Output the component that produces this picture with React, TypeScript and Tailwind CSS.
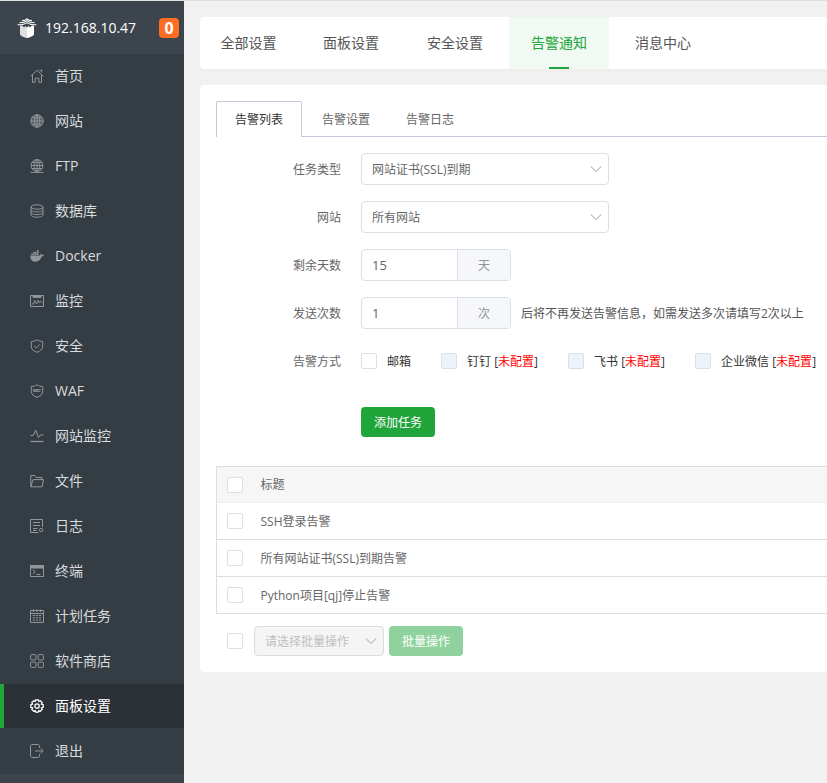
import React, { useState } from "react";

const icons: Record<string, React.ReactNode> = {
  home: (
    <>
      <path d="M.8 7.2 7 1.2l6.2 6" />
      <path d="M2.5 6v7.3h2.7V9.2h3.6v4.1h2.7V6" />
      <path d="M9.6 1.2h2v2.3" />
    </>
  ),
  globe: (
    <>
      <circle cx="7" cy="7" r="6.2" fill="currentColor" fillOpacity=".3" />
      <ellipse cx="7" cy="7" rx="2.8" ry="6.2" />
      <path d="M7 .8v12.4M.8 7h12.4M1.8 3.8h10.4M1.8 10.2h10.4" />
    </>
  ),
  ftp: (
    <>
      <circle cx="7" cy="6.5" r="5.9" />
      <ellipse cx="7" cy="6.5" rx="2.8" ry="5.9" />
      <path d="M7 .6v12.4M1.1 6.5h11.8M1.9 3.6h10.2M1.9 9.5h10.2M.5 13.4h13" />
    </>
  ),
  database: (
    <>
      <ellipse cx="7" cy="3" rx="6" ry="2.2" />
      <path d="M1 3v8c0 1.2 2.7 2.2 6 2.2s6-1 6-2.2V3" />
      <path d="M1 5.7c0 1.2 2.7 2.2 6 2.2s6-1 6-2.2M1 8.4c0 1.2 2.7 2.2 6 2.2s6-1 6-2.2" />
    </>
  ),
  docker: (
    <g fill="currentColor" stroke="none">
      <path d="M.3 6.400h9.500c.8 0 1-.9.5-2 .9.2 1.500.9 1.600 1.500.7-.2 1.500-.1 2 .3-.4 1-1.300 1.300-2.300 1.300C10.700 10.700 8.600 12.700 5.300 12.700 2 12.700.2 10.400.3 6.400z" />
      <path d="M1.300 4.500h1.600v1.500H1.300zM3.200 4.500h1.600v1.500H3.200zM5.100 4.500h1.600v1.500H5.100zM7 4.500h1.600v1.500H7zM3.200 2.700h1.600v1.500H3.200zM5.100 2.700h1.600v1.500H5.100zM7 2.700h1.600v1.500H7zM7 .9h1.600v1.500H7z" />
    </g>
  ),
  monitor: (
    <>
      <path d="M.5 1.500h13v11H.5z" />
      <path d="M3 2h8v1.400H3z" fill="currentColor" />
      <path d="M1.500 10h2l1.200-3.500L6.600 10l1.600-3.600 1.400 2.400 1-1.600 1.900 1.800" />
    </>
  ),
  shield: (
    <>
      <path d="M7 .7c1.700 1.200 3.500 1.700 5.700 1.800v4.700c0 3-2.200 4.900-5.700 6.100C3.500 12.100 1.300 10.200 1.300 7.200V2.500C3.500 2.400 5.300 1.900 7 .7z" />
      <path d="m4.200 7 2.100 2.100 3.600-3.700" />
    </>
  ),
  waf: (
    <>
      <path d="M7 .7c1.700 1.200 3.500 1.700 5.700 1.800v4.700c0 3-2.200 4.900-5.700 6.100C3.500 12.100 1.300 10.200 1.300 7.200V2.500C3.500 2.400 5.300 1.900 7 .7z" />
      <path d="M3 5.500h8M3.500 7.500h7" strokeOpacity=".7" />
      <path d="m3 5.300 1 2.400 1.100-2 1 2 1.100-2.400 1 2.400 1.200-2.200" strokeOpacity=".7" />
    </>
  ),
  pulse: (
    <>
      <path d="M.5 6.500h2.600l2.700-5.300 2.700 7.300 2-2.500h3" />
      <path d="M.5 12.500h13" strokeWidth="1.300" />
    </>
  ),
  folder: (
    <>
      <path d="M.8 12.800V1.500h4l1.500 2h5.500v2" />
      <path d="M.8 12.800 3 5.600h10.400l-1.200 7.200z" />
    </>
  ),
  log: (
    <>
      <path d="M12.500 8V.5h-12v13h8" />
      <path d="M3 3.500h7M3 6.500h7M3 9.500h4.500M3 11.500h3.500" />
      <circle cx="11.200" cy="11" r="1.700" />
    </>
  ),
  terminal: (
    <>
      <path d="M.5 1.500h13v11H.5z" />
      <path d="M.5 1.500h13v2.500H.5z" fill="currentColor" />
      <path d="m3 5.800 2.200 2L3 9.900M6.400 10.500h4" />
    </>
  ),
  calendar: (
    <>
      <path d="M.5 1.500h13v12H.5zM.5 4.500h13M3.500.3v2.700M7 .3v2.700M10.500.3v2.700" />
      <path d="M2.800 6.500h2.300M5.900 6.500h2.300M9 6.500h2.300M2.800 8.800h2.300M5.900 8.800h2.300M9 8.800h2.300M2.800 11.200h2.300M5.900 11.200h2.300M9 11.200h2.300" />
    </>
  ),
  apps: (
    <>
      <rect x=".6" y=".6" width="5.300" height="5.300" rx=".8" />
      <rect x="8.100" y=".6" width="5.300" height="5.300" rx=".8" />
      <rect x=".6" y="8.100" width="5.300" height="5.300" rx=".8" />
      <rect x="8.100" y="8.100" width="5.300" height="5.300" rx=".8" />
    </>
  ),
  gear: (
    <>
      <path
        strokeWidth="1.300"
        d="M5.700.8h2.600l.5 1.600 1.500-.7 1.900 1.900-.8 1.500 1.800.6v2.600l-1.800.6.8 1.500-1.900 1.900-1.500-.7-.5 1.600H5.700l-.5-1.600-1.500.7-1.900-1.900.8-1.500L.8 8.300V5.700l1.800-.6-.8-1.500 1.900-1.900 1.500.7z"
      />
      <circle cx="7" cy="7" r="2.200" strokeWidth="1.300" />
    </>
  ),
  exit: (
    <>
      <path d="M9.500 4V1.500l-1-1h-7l-1 1v11l1 1h7l1-1V10" />
      <path d="M5 7h8M10.700 4.600 13.200 7l-2.500 2.400" />
    </>
  ),
};

const menu = [
  ["home", "首页"],
  ["globe", "网站"],
  ["ftp", "FTP"],
  ["database", "数据库"],
  ["docker", "Docker"],
  ["monitor", "监控"],
  ["shield", "安全"],
  ["waf", "WAF"],
  ["pulse", "网站监控"],
  ["folder", "文件"],
  ["log", "日志"],
  ["terminal", "终端"],
  ["calendar", "计划任务"],
  ["apps", "软件商店"],
  ["gear", "面板设置"],
  ["exit", "退出"],
];

const mainTabs = ["全部设置", "面板设置", "安全设置", "告警通知", "消息中心"];
const subTabs = ["告警列表", "告警设置", "告警日志"];
const methods = [
  { name: "邮箱", ready: true },
  { name: "钉钉", ready: false },
  { name: "飞书", ready: false },
  { name: "企业微信", ready: false },
];
const tasks = ["SSH登录告警", "所有网站证书(SSL)到期告警", "Python项目[qj]停止告警"];

function Logo() {
  return (
    <svg className="h-5 w-5 shrink-0" viewBox="0 0 20 20" fill="#fff" aria-hidden="true">
      <path d="M3 7.500v8.500c0 1.600 3 3.200 7 4V9.500L8.500 8 7 9.500 5.500 7.800z" fill="#e0e0e0" />
      <path d="M17 7.500v8.500c0 1.600-3 3.200-7 4V9.500L11.500 8 13 9.500l1.500-1.700z" />
      <g fill="none" stroke="#fff" strokeWidth="1.100">
        <path d="M5 2.600c2 0 4-.7 5-1.800 1 1.100 3 1.800 5 1.800" />
        <path d="M2.500 4.700c3 0 6-.8 7.500-2 1.500 1.200 4.500 2 7.500 2" />
        <path d="M.6 6.800c4 0 7.800-.9 9.400-2.200 1.600 1.300 5.400 2.200 9.400 2.200" />
      </g>
    </svg>
  );
}

function Check({ id, label, disabled }: { id?: string; label?: string; disabled?: boolean }) {
  return (
    <input
      id={id}
      type="checkbox"
      aria-label={label}
      disabled={disabled}
      className="block h-4 w-4 shrink-0 appearance-none rounded-xs border border-[#dcdfe6] bg-white checked:border-[#20a53a] checked:bg-[#20a53a] disabled:bg-[#edf2fc]"
    />
  );
}

function Chevron() {
  return (
    <svg
      className="pointer-events-none absolute top-1/2 right-[7px] h-3 w-3 -translate-y-1/2"
      viewBox="0 0 12 12"
      fill="none"
      stroke="#c0c4cc"
      strokeWidth="1.200"
      aria-hidden="true"
    >
      <path d="m.8 3.500 5.200 5 5.200-5" />
    </svg>
  );
}

function Row({ label, htmlFor, children }: { label: string; htmlFor?: string; children: React.ReactNode }) {
  return (
    <div className="flex h-8 items-center gap-5">
      {htmlFor ? (
        <label htmlFor={htmlFor} className="w-[125px] shrink-0 text-right">{label}</label>
      ) : (
        <span className="w-[125px] shrink-0 text-right">{label}</span>
      )}
      {children}
    </div>
  );
}

function SelectBox({ id, option }: { id: string; option: string }) {
  return (
    <div className="relative w-[248px]">
      <select id={id} className="block h-8 w-full appearance-none rounded border border-[#dcdfe6] bg-white px-2.5 text-[#666]">
        <option>{option}</option>
      </select>
      <Chevron />
    </div>
  );
}

function UnitInput({ id, value, unit }: { id: string; value: string; unit: string }) {
  return (
    <div className="flex h-8 w-[150px] shrink-0 overflow-hidden rounded border border-[#dcdfe6]">
      <input id={id} defaultValue={value} className="min-w-0 flex-1 px-2.5 text-[13px] text-[#666] outline-none" />
      <span className="flex w-[53px] items-center justify-center border-l border-[#dcdfe6] bg-[#f5f7fa] text-[#909399]">
        {unit}
      </span>
    </div>
  );
}

export default function App() {
  const [page, setPage] = useState("面板设置");
  const [tab, setTab] = useState("告警通知");
  const [sub, setSub] = useState("告警列表");

  return (
    <div className="flex min-h-screen overflow-hidden border-t border-[#e0e0e0] bg-[#f1f1f1] font-['Open_Sans','Noto_Sans_CJK_SC',sans-serif] text-xs/[17px] text-[#666]">
      <aside className="w-46 shrink-0 bg-[#3c444d]">
        <header className="flex h-[53px] items-center pr-[5px] pl-[17px] text-white">
          <Logo />
          <span className="ml-2 flex-1 text-sm">192.168.10.47</span>
          <span className="flex h-5 w-5 items-center justify-center rounded bg-[#ff6c23] text-base font-bold">0</span>
        </header>
        <nav className="flex flex-col gap-px bg-[#353d44] pb-px">
          {menu.map(([icon, name]) => (
            <a
              key={name}
              href="#"
              onClick={() => setPage(name)}
              className={
                "flex h-11 items-center gap-[11px] border-l-4 pl-[26px] text-sm " +
                (page === name
                  ? "border-[#20a53a] bg-[#2c3138] text-white"
                  : "border-transparent text-[#d9dbdc]")
              }
            >
              <svg
                className={"h-3.5 w-3.5 " + (page === name ? "text-white" : "text-[#939699]")}
                viewBox="0 0 14 14"
                fill="none"
                stroke="currentColor"
                aria-hidden="true"
              >
                {icons[icon]}
              </svg>
              {name}
            </a>
          ))}
        </nav>
      </aside>

      <main className="flex min-w-0 flex-1 flex-col gap-4 py-4 pl-4">
        <div className="flex h-13 shrink-0 gap-1 rounded-l bg-white shadow-[0_3px_1px_#eeeeee]">
          {mainTabs.map((name) => (
            <button
              key={name}
              type="button"
              onClick={() => setTab(name)}
              className={
                "flex w-25 flex-col items-center text-sm first:w-[97px] " +
                (tab === name ? "bg-[#f0f9f2] text-[#20a53a]" : "text-[#555]")
              }
            >
              <span className="flex h-[50px] items-center pt-0.5">{name}</span>
              {tab === name && <span className="h-0.5 w-5 bg-[#20a53a]" />}
            </button>
          ))}
        </div>

        <section className="rounded-l bg-white py-4 pl-4">
          <div className="flex h-9 border-b border-[#c8c6dc]">
            {subTabs.map((name) => (
              <button
                key={name}
                type="button"
                onClick={() => setSub(name)}
                className={
                  sub === name
                    ? "mr-0.5 -mb-px h-9 w-[86px] rounded-t-xs border border-b-0 border-[#c8c6dc] bg-white text-[#333]"
                    : "h-9 w-21 text-[#666]"
                }
              >
                {name}
              </button>
            ))}
          </div>

          <form className="mt-4 flex flex-col gap-4" onSubmit={(e) => e.preventDefault()}>
            <Row label="任务类型" htmlFor="type">
              <SelectBox id="type" option="网站证书(SSL)到期" />
            </Row>
            <Row label="网站" htmlFor="site">
              <SelectBox id="site" option="所有网站" />
            </Row>
            <Row label="剩余天数" htmlFor="days">
              <UnitInput id="days" value="15" unit="天" />
            </Row>
            <Row label="发送次数" htmlFor="times">
              <div className="flex items-center gap-2.5 whitespace-nowrap">
                <UnitInput id="times" value="1" unit="次" />
                <span className="text-[#555]">后将不再发送告警信息，如需发送多次请填写2次以上</span>
              </div>
            </Row>
            <Row label="告警方式">
              <div className="flex gap-[30px] whitespace-nowrap text-[#333]">
                {methods.map((m) => (
                  <div key={m.name} className="flex items-center gap-2.5">
                    <Check id={m.name} disabled={!m.ready} />
                    <label htmlFor={m.name}>
                      {m.name}
                      {!m.ready && (
                        <>
                          {" ["}
                          <span className="text-[#f00]">未配置</span>]
                        </>
                      )}
                    </label>
                  </div>
                ))}
              </div>
            </Row>
            <button type="submit" className="mt-3.5 ml-[145px] h-[30px] w-[74px] rounded bg-[#20a53a] text-white">
              添加任务
            </button>
          </form>

          <table className="mt-[29px] w-full border-collapse border border-r-0 border-[#dddddd] text-left">
            <thead>
              <tr className="h-9 border-b border-[#ebeef5] bg-[#f6f6f6]">
                <th className="w-11 pl-2.5">
                  <Check label="全选" />
                </th>
                <th className="font-normal">标题</th>
              </tr>
            </thead>
            <tbody>
              {tasks.map((t) => (
                <tr key={t} className="h-[37px] border-b border-[#dddddd]">
                  <td className="pl-2.5">
                    <Check label={t} />
                  </td>
                  <td>{t}</td>
                </tr>
              ))}
            </tbody>
          </table>

          <div className="mt-3 flex items-center pl-[11px]">
            <Check label="全选任务" />
            <div className="relative mr-[5px] ml-[11px] w-[130px]">
              <select
                disabled
                aria-label="批量操作"
                className="block h-[30px] w-full appearance-none rounded border border-[#dcdcdc] bg-[#f5f5f5] px-2.5 text-[#c0c0c0] opacity-100"
              >
                <option>请选择批量操作</option>
              </select>
              <Chevron />
            </div>
            <button type="button" disabled className="h-[30px] w-[74px] rounded bg-[#90d29d] text-white">
              批量操作
            </button>
          </div>
        </section>
      </main>
    </div>
  );
}
